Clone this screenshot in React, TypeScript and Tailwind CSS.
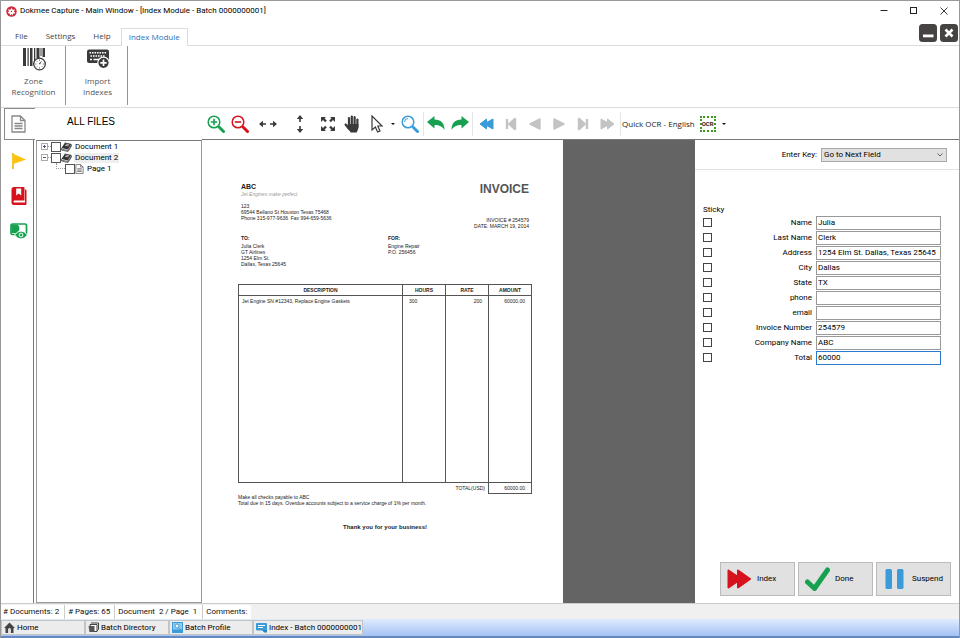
import { useState } from "react";
import type { ReactNode } from "react";

interface Field {
  id: string;
  label: string;
  value: string;
}

const initialFields: Field[] = [
  { id: "name", label: "Name", value: "Julia" },
  { id: "lastName", label: "Last Name", value: "Clerk" },
  { id: "address", label: "Address", value: "1254 Elm St. Dallas, Texas 25645" },
  { id: "city", label: "City", value: "Dallas" },
  { id: "state", label: "State", value: "TX" },
  { id: "phone", label: "phone", value: "" },
  { id: "email", label: "email", value: "" },
  { id: "invoiceNumber", label: "Invoice Number", value: "254579" },
  { id: "companyName", label: "Company Name", value: "ABC" },
  { id: "total", label: "Total", value: "60000" },
];

const GREEN = "#16a050";
const RED = "#d6131c";
const BLUE = "#3b9bd8";
const DARK = "#3a3a3a";
const PALE = "#c3c3c3";

/* ---------- Title bar and menu ---------- */

function TitleBar() {
  return (
    <header className="flex h-5 shrink-0 items-center pl-[5px]">
      <svg className="h-[11px] w-[11px]" viewBox="0 0 22 22">
        <circle cx="11" cy="11" r="10.5" fill="#cf2a3c" />
        <path d="M11 3.500l2 3.800 4.800-.3-1.800 4 3 3.500-4.500.5L13 19l-2-3-2.500 3-1.200-4-4.300-.8 3-3.200L4.200 7l4.800.3z" fill="#fff" />
        <circle cx="11" cy="11" r="1.500" fill="#cf2a3c" />
      </svg>
      <h1 className="ml-[3px] flex-1 font-['Roboto',sans-serif] text-[8px] leading-3 text-black">
        Dokmee Capture - Main Window - [Index Module - Batch 0000000001]
      </h1>
      <div className="flex items-center gap-3 pr-1.5">
        <button aria-label="Minimize" className="flex h-4 w-[18px] items-center justify-center">
          <svg className="h-2 w-2" viewBox="0 0 8 8"><path d="M0.5 3.500h7" stroke="#222" /></svg>
        </button>
        <button aria-label="Maximize" className="flex h-4 w-[18px] items-center justify-center">
          <svg className="h-2 w-2" viewBox="0 0 8 8"><rect x="0.5" y="0.5" width="6" height="6" fill="none" stroke="#222" /></svg>
        </button>
        <button aria-label="Close" className="flex h-4 w-[18px] items-center justify-center">
          <svg className="h-2 w-2" viewBox="0 0 8 8"><path d="M0.5 0.5l7 7M7.5 0.5l-7 7" stroke="#222" strokeWidth="0.9" /></svg>
        </button>
      </div>
    </header>
  );
}

function MenuBar() {
  return (
    <nav className="flex h-[25px] shrink-0 items-end border-b border-[#dcdcdc] text-[8px] leading-3 text-[#444]">
      <button className="ml-3.5 mb-[3px]">File</button>
      <button className="ml-[18px] mb-[3px]">Settings</button>
      <button className="ml-[18px] mb-[3px]">Help</button>
      <button className="-mb-px ml-[10px] h-[18px] border border-b-0 border-[#dcdcdc] bg-white px-[7px] pb-[2px] text-[#2b73b9]">
        Index Module
      </button>
      <div className="mb-[3px] ml-auto flex gap-[3px] pr-px">
        <button aria-label="Minimize module" className="h-[18px] w-[18px]">
          <svg viewBox="0 0 18 18"><rect width="18" height="18" rx="3.5" fill="#474343" /><rect x="4" y="10.5" width="10.5" height="2.8" fill="#fff" /></svg>
        </button>
        <button aria-label="Close module" className="h-[18px] w-[18px]">
          <svg viewBox="0 0 18 18"><rect width="18" height="18" rx="3.5" fill="#474343" /><path d="M5.5 5.5l7 7M12.5 5.5l-7 7" stroke="#fff" strokeWidth="2.6" /></svg>
        </button>
      </div>
    </nav>
  );
}

function Ribbon() {
  return (
    <div className="flex h-[62px] shrink-0 border-b border-[#dcdcdc] pb-[2px] text-[8px] leading-[11px] text-[#555]">
      <button className="flex w-[65px] flex-col items-center border-r border-r-[#7b98bd] pl-px pt-[2px]">
        <svg className="h-6 w-6" viewBox="0 0 24 24" fill={DARK}>
          <path d="M1 0h3v18H1zM5.500 0h1.200v18H5.500zM8 0h2.500v18H8zM12 0h1.300v18H12zM14.500 0h3v10h-3zM18.500 0h1v8h-1zM20.500 0h2.500v9h-2.500z" />
          <circle cx="17.500" cy="16" r="5.800" fill="#fff" stroke={DARK} strokeWidth="1.300" />
          <path d="M16.800 15.800l3.300-3.400-2.100 4.200z" />
          <path d="M17.500 11.500v1.300M13 16h1.300M17.500 20.500v-1.300M22 16h-1.300M14.500 13l.7.7M14.500 19l.7-.7M20.500 19l-.7-.7" stroke={DARK} strokeWidth="0.700" />
        </svg>
        <span className="mt-[3px]">Zone<br />Recognition</span>
      </button>
      <button className="flex w-[62px] flex-col items-center border-r border-r-[#7b98bd] pl-[2px] pt-[2px]">
        <svg className="h-6 w-6" viewBox="0 0 24 24">
          <rect x="1" y="1.500" width="22" height="13.500" rx="2" fill={DARK} />
          <path d="M3.500 4.800h17" stroke="#fff" strokeWidth="1.500" strokeDasharray="1.600 0.900" />
          <path d="M4.500 8h15" stroke="#fff" strokeWidth="1.500" strokeDasharray="1.600 0.900" />
          <path d="M4 11.600h2M7.500 11.600h7" stroke="#fff" strokeWidth="1.500" />
          <circle cx="17.500" cy="14.800" r="5.700" fill={DARK} stroke="#fff" strokeWidth="1.200" />
          <path d="M17.500 11.600v6.400M14.300 14.800h6.400" stroke="#fff" strokeWidth="1.700" />
        </svg>
        <span className="mt-[3px]">Import<br />Indexes</span>
      </button>
    </div>
  );
}

/* ---------- Left side ---------- */

function DocIcon({ className }: { className: string }) {
  return (
    <svg className={className} viewBox="0 0 15 18" fill="none" stroke="currentColor" strokeWidth="1.300">
      <path d="M1 1h8.500L14 5.500V17H1zM9.500 1v4.500H14" />
      <path d="M3.500 8.500h8M3.500 11h8M3.500 13.500h8" />
    </svg>
  );
}

function SideTabs() {
  return (
    <div className="flex w-[31px] shrink-0 flex-col items-center border-r border-[#777] pl-px pt-3">
      <button aria-label="Flags" className="h-[18px] w-4">
        <svg viewBox="0 0 16 18"><path d="M2 1v16" stroke="#ecb800" strokeWidth="1.600" /><path d="M2.500 2L15 7.500 2.500 12z" fill="#ffc20e" /></svg>
      </button>
      <button aria-label="Bookmarks" className="mt-[17px] h-[18px] w-4">
        <svg viewBox="0 0 16 18">
          <path d="M3 0h9.500a1 1 0 0 1 1 1v12.500H3.500a1 1 0 0 0 0 2H14V2.500h.5a1 1 0 0 1 1 1V17a1 1 0 0 1-1 1H3a2.500 2.500 0 0 1-2.500-2.500v-13A2.500 2.500 0 0 1 3 0z" fill={RED} />
          <path d="M5.200 1.500h5v7L7.700 6.500 5.200 8.500z" fill="#fff" />
          <path d="M3.500 14.500h10.500" stroke="#fff" strokeWidth="0.900" />
        </svg>
      </button>
      <button aria-label="Review" className="mt-[18px] h-[17px] w-[18px]">
        <svg viewBox="0 0 18 17">
          <rect x="1" y="1" width="15.500" height="10.500" rx="1.500" fill="#fff" stroke={GREEN} strokeWidth="1.700" />
          <path d="M1.500 1.500h6a5 5 0 0 1-1 8.500h-5z" fill={GREEN} />
          <path d="M4.500 12q6.500-8 13 0-6.500 8-13 0z" fill={GREEN} stroke="#fff" />
          <circle cx="11" cy="12" r="1.900" fill={GREEN} stroke="#fff" strokeWidth="1" />
        </svg>
      </button>
    </div>
  );
}

function BookIcon() {
  return (
    <svg className="h-[10px] w-[11px]" viewBox="0 0 22 20">
      <path d="M8 1l13 3-7 11L1 12z" fill="#333" />
      <path d="M9.500 4l7 1.500M8 6.500l7 1.500" stroke="#fff" strokeWidth="1.300" />
      <path d="M1 12v4l13 3 7-11V5M2 14.500l12 2.500 6-9.500" fill="none" stroke="#333" strokeWidth="1.400" />
    </svg>
  );
}

function TreeItem({ label, open, selected }: { label: string; open?: boolean; selected?: boolean }) {
  return (
    <li className="flex h-[11px] items-center">
      <button aria-label={open ? "Collapse" : "Expand"} className="h-[7px] w-[7px]">
        <svg viewBox="0 0 7 7" fill="none">
          <rect x="0.500" y="0.500" width="6" height="6" stroke="#aaa" />
          <path d={open ? "M2 3.500h3" : "M2 3.500h3M3.500 2v3"} stroke="#557" />
        </svg>
      </button>
      <span className="w-[3px] border-t border-dotted border-[#999]" />
      <label className="flex items-center">
        <input type="checkbox" className="h-[10px] w-[10px] appearance-none border border-[#555] bg-white checked:bg-[#444]" />
        <BookIcon />
        <span className={selected ? "ml-[2px] bg-[#efefef] px-px" : "ml-[2px] px-px"}>{label}</span>
      </label>
    </li>
  );
}

function FileTree() {
  return (
    <div className="ml-[2px] min-w-0 flex-1 border border-[#999] border-t-[#777]">
      <ul className="pl-1 text-[8px] leading-[10px] text-black">
        <TreeItem label="Document 1" />
        <TreeItem label="Document 2" open selected />
        <li className="flex h-[11px] items-center pl-[15px]">
          <span className="-mt-[5px] h-[6px] w-[9px] border-b border-l border-dotted border-[#999]" />
          <label className="flex items-center">
            <input type="checkbox" className="h-[10px] w-[10px] appearance-none border border-[#555] bg-white checked:bg-[#444]" />
            <DocIcon className="h-[10px] w-[9px] text-[#555]" />
            <span className="ml-[2px] px-px">Page 1</span>
          </label>
        </li>
      </ul>
    </div>
  );
}

/* ---------- Toolbar ---------- */

function Tool({ label, children }: { label: string; children: ReactNode }) {
  return (
    <button aria-label={label} className="h-[18px] w-[18px] shrink-0">
      <svg viewBox="0 0 18 18" fill="none">{children}</svg>
    </button>
  );
}

function Lens({ color, children }: { color: string; children?: ReactNode }) {
  return (
    <>
      <circle cx="7" cy="7" r="5.800" stroke={color} strokeWidth="1.500" />
      <path d="M11 11l1.500 1.500" stroke={color} strokeWidth="1.500" />
      <path d="M12.500 12.500l4 4" stroke={color} strokeWidth="3" strokeLinecap="round" />
      {children}
    </>
  );
}

function Divider() {
  return <span className="h-6 w-px shrink-0 bg-[#e6e6e6]" />;
}

function Dropper({ label }: { label: string }) {
  return (
    <button aria-label={label} className="flex h-[18px] w-2 shrink-0 items-center justify-center">
      <svg className="h-[2px] w-1" viewBox="0 0 4 2"><path d="M0 0h4L2 2z" fill="#111" /></svg>
    </button>
  );
}

function Toolbar() {
  return (
    <div className="flex h-8 min-w-0 flex-1 items-center border-b border-[#777] pl-[5px]">
      <div className="flex gap-1.5">
        <Tool label="Zoom in"><Lens color={GREEN}><path d="M7 3.800v6.400M3.800 7h6.400" stroke={GREEN} strokeWidth="1.600" /></Lens></Tool>
        <Tool label="Zoom out"><Lens color={RED}><path d="M3.800 7h6.400" stroke={RED} strokeWidth="1.600" /></Lens></Tool>
      </div>
      <div className="ml-[10px] flex gap-[14px]">
        <Tool label="Fit width">
          <path d="M1 9h6M11 9h6" stroke={DARK} strokeWidth="1.600" />
          <path d="M0 9l4-3.200v6.400zM18 9l-4-3.200v6.400z" fill={DARK} />
        </Tool>
        <Tool label="Fit height">
          <path d="M9 1v6M9 11v6" stroke={DARK} strokeWidth="1.600" />
          <path d="M9 0L5.800 4h6.400zM9 18l-3.200-4h6.400z" fill={DARK} />
        </Tool>
      </div>
      <div className="ml-[10px] flex gap-[6px]">
        <Tool label="Fit page">
          <path d="M2 2h5L5.600 3.400 7.800 5.600 6.200 7.200 4 5 2 7zM16 2v5l-2-2-2.200 2.200-1.600-1.600 2.200-2.200L11 2zM2 16v-5l2 2 2.200-2.200 1.600 1.600-2.200 2.200L7 16zM16 16h-5l1.400-1.400-2.200-2.200 1.600-1.600L14 13l2-2z" fill={DARK} />
        </Tool>
        <Tool label="Pan">
          <g stroke={DARK} strokeWidth="2.200" strokeLinecap="round">
            <path d="M6 3v8M8.800 1.500V11M11.600 2.200V11M14.400 4.500V12M2.600 9.500l3.200 4" />
          </g>
          <path d="M5 9h10.400v3.500c0 2-1.200 3.200-1.600 5H7.600c-.4-1.500-2-2.500-3.600-5z" fill={DARK} />
        </Tool>
      </div>
      <div className="ml-[7px] flex">
        <Tool label="Select">
          <path d="M4 1v14l3.400-3 2.200 5 2.400-1.100L9.800 11H14z" fill="#fff" stroke={DARK} strokeWidth="1.200" />
        </Tool>
        <span className="ml-[3px] flex"><Dropper label="Select options" /></span>
      </div>
      <div className="ml-1 flex">
        <Tool label="Find"><Lens color={BLUE}><path d="M3.500 7A3.500 3.500 0 0 1 7 3.500" stroke={BLUE} /></Lens></Tool>
      </div>
      <span className="ml-1 flex"><Divider /></span>
      <div className="ml-[3px] flex gap-[6px]">
        <Tool label="Undo"><path d="M0 7l7.500-6v3.500C14 4.500 17.500 8 17.500 15c-2-3.500-5-5-10-5v3.500z" fill={GREEN} /></Tool>
        <Tool label="Redo"><path d="M18 7l-7.500-6v3.500C4 4.500.5 8 .5 15c2-3.500 5-5 10-5v3.500z" fill={GREEN} /></Tool>
      </div>
      <span className="ml-[3px] flex"><Divider /></span>
      <div className="ml-[5px] flex gap-[6px]">
        <Tool label="First document"><path d="M2 9l6.500-5v3.500L15 4v10l-6.500-3.500V14z" fill={BLUE} stroke={BLUE} strokeLinejoin="round" /></Tool>
        <Tool label="First page"><path d="M5 4v10M13 4v10L7.500 9z" fill={PALE} stroke={PALE} strokeWidth="2.400" strokeLinejoin="round" /></Tool>
        <Tool label="Previous page"><path d="M14 4v10L4 9z" fill={PALE} stroke={PALE} strokeWidth="1.400" strokeLinejoin="round" /></Tool>
        <Tool label="Next page"><path d="M4 4v10l10-5z" fill={PALE} stroke={PALE} strokeWidth="1.400" strokeLinejoin="round" /></Tool>
        <Tool label="Last page"><path d="M13 4v10M5 4v10l5.500-5z" fill={PALE} stroke={PALE} strokeWidth="2.400" strokeLinejoin="round" /></Tool>
        <Tool label="Last document"><path d="M16 9L9.500 4v3.500L3 4v10l6.500-3.500V14z" fill={PALE} stroke={PALE} strokeLinejoin="round" /></Tool>
      </div>
      <span className="ml-1 flex"><Divider /></span>
      <span className="ml-px whitespace-nowrap text-[8px] text-[#222]">Quick OCR - English</span>
      <button aria-label="Run OCR" className="ml-[5px] flex h-4 w-4 shrink-0 items-center justify-center border-2 border-dotted border-[#3d9a1f] font-['Roboto',sans-serif] text-[6px] font-bold leading-[10px] text-[#222]">
        OCR
      </button>
      <span className="ml-1 flex"><Dropper label="OCR options" /></span>
    </div>
  );
}

/* ---------- Scanned page ---------- */

function Invoice() {
  return (
    <article className="w-[361px] shrink-0 bg-white pl-9 pr-[31px] pt-[43px] font-['Liberation_Sans',Arial,sans-serif] text-[5px] leading-[6px] text-[#222]">
      <div className="flex justify-between px-[3px]">
        <div>
          <h2 className="text-[7px] font-bold leading-[8px]">ABC</h2>
          <p className="italic text-[#999]">Jet Engines make perfect</p>
          <p className="mt-[6px]">123<br />69544 Bellano St Houston Texas 75468<br />Phone 315-977-9636&nbsp; Fax 994-659-5636</p>
        </div>
        <div className="text-right">
          <p className="text-[12px] font-bold leading-3 text-[#555]">INVOICE</p>
          <p className="mt-[22px]">INVOICE # 254579<br />DATE: MARCH 19, 2014</p>
        </div>
      </div>
      <div className="mt-1.5 grid grid-cols-2 px-[3px]">
        <div>
          <h3 className="font-bold">TO:</h3>
          <p className="mt-[2px]">Julia Clerk<br />GT Airlines<br />1254 Elm St.<br />Dallas, Texas 25645</p>
        </div>
        <div className="pl-[3px]">
          <h3 className="font-bold">FOR:</h3>
          <p className="mt-[2px]">Engine Repair<br />P.O. 256456</p>
        </div>
      </div>
      <table className="mt-[17px] w-full table-fixed border-collapse">
        <colgroup>
          <col />
          <col className="w-[43px]" />
          <col className="w-[43px]" />
          <col className="w-[43px]" />
        </colgroup>
        <thead>
          <tr className="h-[11px]">
            <th className="border border-[#555]">DESCRIPTION</th>
            <th className="border border-[#555]">HOURS</th>
            <th className="border border-[#555]">RATE</th>
            <th className="border border-[#555]">AMOUNT</th>
          </tr>
        </thead>
        <tbody>
          <tr className="h-[187px] align-top">
            <td className="border border-[#555] px-[3px] pt-[2px]">Jet Engine SN #12343, Replace Engine Gaskets</td>
            <td className="border border-[#555] px-[6px] pt-[2px]">300</td>
            <td className="border border-[#555] px-[6px] pt-[2px] text-right">200</td>
            <td className="border border-[#555] px-[6px] pt-[2px] text-right">60000.00</td>
          </tr>
          <tr className="h-[11px]">
            <td colSpan={3} className="pr-[3px] text-right">TOTAL(USD)</td>
            <td className="border border-[#555] px-[6px] text-right">60000.00</td>
          </tr>
        </tbody>
      </table>
      <p>Make all checks payable to ABC<br />Total due in 15 days. Overdue accounts subject to a service charge of 1% per month.</p>
      <p className="mt-[18px] text-center text-[6px] font-bold leading-[7px]">Thank you for your business!</p>
    </article>
  );
}

/* ---------- Index form ---------- */

function IndexForm() {
  const [fields, setFields] = useState(initialFields);

  const handleChange = (id: string, value: string) => {
    setFields(fields.map((f) => (f.id === id ? { ...f, value } : f)));
  };

  return (
    <section className="flex w-[264px] shrink-0 flex-col bg-white text-[8px] leading-[10px] text-black">
      <div className="flex h-[30px] shrink-0 items-center justify-end border-b border-[#e2e2e2] pr-3">
        <label htmlFor="enterKey" className="mr-1">Enter Key:</label>
        <div className="relative">
          <select id="enterKey" className="block h-[14px] w-[126px] appearance-none border border-[#aaa] bg-[#e1e1e1] pl-0.5">
            <option>Go to Next Field</option>
          </select>
          <svg className="pointer-events-none absolute right-1 top-[5px] h-1 w-[6px]" viewBox="0 0 6 4" fill="none"><path d="M0.500 0.500L3 3l2.500-2.500" stroke="#555" strokeWidth="0.900" /></svg>
        </div>
      </div>
      <form className="pl-2 pr-[18px] pt-[35px]">
        <p>Sticky</p>
        {fields.map((f) => (
          <div key={f.id} className="flex h-[15px] items-center">
            <input
              type="checkbox"
              aria-label={"Sticky " + f.label}
              className="h-[9px] w-[9px] appearance-none border border-[#444] bg-white checked:bg-[#333]"
            />
            <label htmlFor={f.id} className="ml-auto mr-1">{f.label}</label>
            <input
              id={f.id}
              type="text"
              autoFocus={f.id === "total"}
              value={f.value}
              onChange={(e) => handleChange(f.id, e.target.value)}
              className="h-[14px] w-[125px] border border-[#999] bg-white px-px outline-none focus:border-[#2a7ad0]"
            />
          </div>
        ))}
      </form>
      <div className="mt-auto flex justify-end gap-[3px] pb-[7px] pr-2">
        <button className="flex h-[34px] w-[75px] items-center border border-[#bbb] bg-[#e1e1e1] pl-1.5">
          <svg className="h-5 w-6" viewBox="0 0 24 20"><path d="M1.500 1.500L11 8V1.500L23 10 11 18.500V12l-9.500 6.500z" fill={RED} stroke={RED} strokeWidth="2" strokeLinejoin="round" /></svg>
          <span className="ml-[6px]">Index</span>
        </button>
        <button className="flex h-[34px] w-[75px] items-center border border-[#bbb] bg-[#e1e1e1] pl-1.5">
          <svg className="h-6 w-[25px]" viewBox="0 0 25 24"><path d="M2.500 15l7 6.500L22.500 3" fill="none" stroke={GREEN} strokeWidth="5" strokeLinejoin="round" strokeLinecap="round" /></svg>
          <span className="ml-[5px]">Done</span>
        </button>
        <button className="flex h-[34px] w-[75px] items-center border border-[#bbb] bg-[#e1e1e1] pl-2">
          <svg className="h-[22px] w-[19px]" viewBox="0 0 19 22" fill={BLUE}><rect x="0.500" y="1" width="6.500" height="20" rx="1.500" /><rect x="12" y="1" width="6.500" height="20" rx="1.500" /></svg>
          <span className="ml-[8px]">Suspend</span>
        </button>
      </div>
    </section>
  );
}

/* ---------- Bottom bars ---------- */

function StatusBar() {
  return (
    <div className="flex h-4 shrink-0 items-center border-t border-[#ccc] bg-[#f0f0f0] text-[8px] leading-[14px] text-[#111]">
      <span className="border-r border-[#ccc] bg-white pl-0.5 pr-[5px]"># Documents: 2</span>
      <span className="border-r border-[#ccc] bg-white pl-[3px] pr-1"># Pages: 65</span>
      <span className="border-r border-[#ccc] bg-white pl-[3px] pr-[5px]">Document&nbsp; 2 / Page&nbsp; 1</span>
      <span className="bg-white pl-[3px] pr-1">Comments:</span>
    </div>
  );
}

function TaskButton({ label, wide, children }: { label: string; wide?: boolean; children: ReactNode }) {
  return (
    <button
      className={
        wide
          ? "flex h-[15px] w-[110px] items-center gap-[2px] border border-[#c4c4c4] bg-[#ececec] pl-0.5"
          : "flex h-[15px] w-[84px] items-center gap-[2px] border border-[#c4c4c4] bg-[#ececec] pl-0.5"
      }
    >
      <svg className="h-[11px] w-[11px] shrink-0" viewBox="0 0 11 11">{children}</svg>
      <span className="whitespace-nowrap">{label}</span>
    </button>
  );
}

function TaskBar() {
  return (
    <footer className="flex h-[19px] shrink-0 items-start border-b-2 border-[#6487bd] bg-linear-to-b from-[#dfecfd] to-[#a3c2f3] pt-px text-[8px] leading-[10px] text-black">
      <TaskButton label="Home">
        <path d="M0 6l5.500-5.500L11 6H9.500v5h-8V6z" fill="#444" />
        <path d="M4 11V7.500a1.500 1.500 0 0 1 3 0V11z" fill="#ddd" />
      </TaskButton>
      <TaskButton label="Batch Directory">
        <path d="M3 1h7.500v6.500L9 9" fill="none" stroke="#444" />
        <path d="M2 2.500h7v7H3.500z" fill="#fff" stroke="#444" />
        <path d="M0.500 4h6v6H1.500z" fill="#555" />
      </TaskButton>
      <TaskButton label="Batch Profile">
        <rect x="0.500" y="0.500" width="10" height="10" fill="#8fcaf0" stroke="#3b9bd8" />
        <path d="M1 8h9v2.500H1zM6 5l4 4" fill="#3b9bd8" stroke="#3b9bd8" />
        <circle cx="5" cy="4" r="2" fill="#fff" stroke="#3b9bd8" />
      </TaskButton>
      <TaskButton label="Index - Batch 0000000001" wide>
        <rect x="0" y="1" width="11" height="7.500" rx="1" fill="#3b9bd8" />
        <path d="M2 3.500h7M2 5.500h5" stroke="#fff" />
        <path d="M6 8h5v2.500H8z" fill="#2c86c4" />
      </TaskButton>
    </footer>
  );
}

export default function App() {
  return (
    <div className="flex h-screen flex-col overflow-hidden border-x border-t border-[#999] bg-white font-['Roboto','Liberation_Sans',sans-serif]">
      <div className="flex shrink-0 flex-col font-['Open_Sans',sans-serif]">
        <TitleBar />
        <MenuBar />
        <Ribbon />
      </div>
      <div className="flex shrink-0 bg-white">
        <div className="flex w-[201px] shrink-0 items-center pl-[3px]">
          <button aria-label="All files" className="flex h-8 w-[31px] items-center justify-center border border-r-0 border-[#888] pr-[3px] text-[#888]">
            <DocIcon className="h-[18px] w-[15px]" />
          </button>
          <h2 className="ml-8 pb-1.5 font-['Liberation_Sans',Arial,sans-serif] text-[10px] font-medium text-black">ALL FILES</h2>
        </div>
        <div className="flex min-w-0 flex-1 font-['Open_Sans',sans-serif]">
          <Toolbar />
        </div>
      </div>
      <main className="flex min-h-0 flex-1">
        <div className="flex w-[201px] shrink-0 pl-[2px]">
          <SideTabs />
          <FileTree />
        </div>
        <div className="flex min-w-0 flex-1 overflow-hidden bg-[#646464]">
          <Invoice />
        </div>
        <IndexForm />
      </main>
      <StatusBar />
      <TaskBar />
    </div>
  );
}
